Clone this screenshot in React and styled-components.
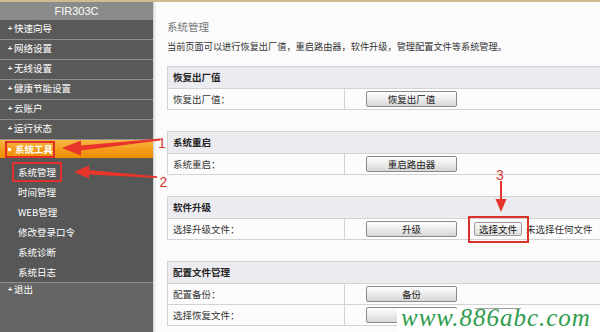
import React from 'react';
import styled, { createGlobalStyle } from 'styled-components';

const Global = createGlobalStyle`
  html, body { margin: 0; padding: 0; background: #fbfbfb; }
  body {
    width: 600px; height: 332px; overflow: hidden;
    font-family: "Noto Sans CJK SC", "Liberation Sans", sans-serif;
  }
`;

const Page = styled.div`
  position: relative;
  width: 600px;
  height: 332px;
  overflow: hidden;
  display: flex;
  flex-direction: column;
  background: #fbfbfb;
`;

const TopLine = styled.div`
  flex: none;
  height: 2px;
  background: #cfbb90;
`;

const Body = styled.div`
  flex: 1;
  display: flex;
  min-height: 0;
`;

const Sidebar = styled.nav`
  flex: none;
  width: 153px;
  display: flex;
  flex-direction: column;
  background: #656565;
  color: #fff;
  font-size: 9.5px;
`;

const Brand = styled.div`
  height: 18px;
  line-height: 18px;
  background: #8b8b8b;
  color: #fff;
  text-align: center;
  font-family: "Liberation Sans", Arial, sans-serif;
  font-size: 11px;
`;

const MenuItem = styled.div`
  height: 19px;
  line-height: 17px;
  border-bottom: 1px solid #8f8f8f;
  background: #595959;
  padding-left: 6px;
  display: flex;
  white-space: nowrap;
`;

const Plus = styled.span`
  display: inline-block;
  width: 8px;
  text-align: center;
  font-size: 8px;
  font-weight: bold;
  font-family: "Liberation Sans", sans-serif;
`;

const ActiveItem = styled.div`
  height: 18px;
  background: linear-gradient(to bottom, #f9b849 0%, #f5a021 45%, #ee8c00 100%);
  padding-left: 5px;
  display: flex;
  align-items: center;
`;

const ActiveMark = styled.span`
  display: inline-flex;
  align-items: center;
  height: 13px;
  line-height: 13px;
  border: 2px solid #e0302a;
  padding: 0 0 0 1px;
  font-weight: bold;
  gap: 4px;
`;

const Square = styled.span`
  width: 3px;
  height: 3px;
  background: #fff;
`;

const SubMenu = styled.div`
  background: #575757;
  padding-top: 4px;
  border-bottom: 1px solid #8f8f8f;
`;

const SubItem = styled.div`
  height: 20px;
  line-height: 20px;
  padding-left: ${p => (p.$marked ? 12 : 18)}px;
  display: flex;
  align-items: center;
`;

const SubMark = styled.span`
  height: 16px;
  line-height: 16px;
  padding: 0 4px;
  border: 2px solid #e0302a;
`;

const Logout = styled.div`
  height: 19px;
  line-height: 13px;
  padding-left: 6px;
  display: flex;
`;

const Divider = styled.div`
  flex: none;
  width: 2px;
  border-left: 1px solid #d2d2d2;
  background: #eeeeee;
`;

const Main = styled.main`
  flex: 1;
  overflow: hidden;
  padding: 18px 0 0 11px;
  color: #333;
`;

const Title = styled.div`
  font-size: 10.5px;
  line-height: 14px;
  color: #777;
`;

const Desc = styled.div`
  margin-top: 5px;
  font-size: 9.2px;
  line-height: 14px;
  color: #333;
  white-space: nowrap;
`;

const Section = styled.section`
  margin-top: ${p => (p.$first ? 13 : 21)}px;
  width: 470px;
  border: 1px solid #d3d3d3;
  background: #fcfcfc;
`;

const SectionHead = styled.div`
  height: 21px;
  line-height: 21px;
  padding-left: 5px;
  background: #ebebf0;
  border-bottom: 1px solid #d3d3d3;
  font-size: 9.5px;
  font-weight: bold;
  color: #222;
`;

const Row = styled.div`
  display: grid;
  grid-template-columns: 177px 1fr;
  height: 20px;
  border-top: ${p => (p.$first ? 'none' : '1px solid #d3d3d3')};
`;

const Label = styled.div`
  border-right: 1px solid #d3d3d3;
  padding-left: 5px;
  line-height: 20px;
  font-size: 9.5px;
  color: #333;
`;

const Cell = styled.div`
  display: flex;
  align-items: center;
  padding-left: 21px;
  font-size: 9.5px;
  white-space: nowrap;
`;

const Button = styled.button`
  width: 91px;
  height: 16px;
  padding: 0;
  border: 1px solid #8a8a8a;
  border-radius: 2px;
  background: linear-gradient(to bottom, #fefefe 0%, #ececec 50%, #d6d6d6 100%);
  font-family: "Noto Sans CJK SC", sans-serif;
  font-size: 9.5px;
  line-height: 14px;
  color: #222;
`;

const FilePick = styled.span`
  position: relative;
  margin-left: 17px;
  display: inline-flex;
  &::after {
    content: '';
    position: absolute;
    left: -6px;
    right: -7px;
    top: -6px;
    bottom: -7px;
    border: 2px solid #d6332b;
  }
`;

const FileButton = styled.button`
  width: 48px;
  height: 14px;
  padding: 0;
  margin-left: ${p => (p.$spaced ? 17 : 0)}px;
  border: 1px solid #9c9c9c;
  border-radius: 2px;
  background: linear-gradient(to bottom, #fafafa, #dedede);
  font-family: "Noto Sans CJK SC", sans-serif;
  font-size: 9.5px;
  line-height: 12px;
  color: #111;
`;

const FileNote = styled.span`
  margin-left: 4px;
  color: #333;
`;

const Overlay = styled.svg`
  position: absolute;
  left: 0;
  top: 0;
  pointer-events: none;
`;

const Watermark = styled.div`
  position: absolute;
  left: 397px;
  top: 309px;
  right: 0;
  bottom: 0;
  background: #fff;
  padding-left: 4px;
  font-family: "Liberation Serif", serif;
  font-style: italic;
  font-size: 25px;
  letter-spacing: 1px;
  line-height: 18px;
  color: #2f9c4e;
  white-space: nowrap;
`;

const menu = ['快速向导', '网络设置', '无线设置', '健康节能设置', '云账户', '运行状态'];
const sub = ['时间管理', 'WEB管理', '修改登录口令', '系统诊断', '系统日志'];

const sections = [
  { head: '恢复出厂值', rows: [{ label: '恢复出厂值：', btn: '恢复出厂值' }] },
  { head: '系统重启', rows: [{ label: '系统重启：', btn: '重启路由器' }] },
  { head: '软件升级', rows: [{ label: '选择升级文件：', btn: '升级', file: true }] },
  {
    head: '配置文件管理',
    rows: [
      { label: '配置备份：', btn: '备份' },
      { label: '选择恢复文件：', btn: '', plainFile: true },
    ],
  },
];

export default function App() {
  return (
    <Page>
      <Global />
      <TopLine />
      <Body>
        <Sidebar>
          <Brand>FIR303C</Brand>
          {menu.map(m => (
            <MenuItem key={m}>
              <Plus>+</Plus>
              {m}
            </MenuItem>
          ))}
          <ActiveItem>
            <ActiveMark>
              <Square />
              系统工具
            </ActiveMark>
          </ActiveItem>
          <SubMenu>
            <SubItem $marked>
              <SubMark>系统管理</SubMark>
            </SubItem>
            {sub.map(s => (
              <SubItem key={s}>{s}</SubItem>
            ))}
          </SubMenu>
          <Logout>
            <Plus>+</Plus>
            退出
          </Logout>
        </Sidebar>
        <Divider />
        <Main>
          <Title>系统管理</Title>
          <Desc>当前页面可以进行恢复出厂值，重启路由器，软件升级，管理配置文件等系统管理。</Desc>
          {sections.map((s, i) => (
            <Section key={s.head} $first={i === 0}>
              <SectionHead>{s.head}</SectionHead>
              {s.rows.map((r, j) => (
                <Row key={r.label} $first={j === 0}>
                  <Label>{r.label}</Label>
                  <Cell>
                    <Button aria-label={r.btn || '恢复'}>{r.btn}</Button>
                    {r.file && (
                      <>
                        <FilePick>
                          <FileButton>选择文件</FileButton>
                        </FilePick>
                        <FileNote>未选择任何文件</FileNote>
                      </>
                    )}
                    {r.plainFile && <FileButton $spaced aria-label="选择文件" />}
                  </Cell>
                </Row>
              ))}
            </Section>
          ))}
        </Main>
      </Body>
      <Overlay width="600" height="332" viewBox="0 0 600 332">
        <polygon
          points="62,148 81,140.5 81,145.5 160,138.6 160,140.4 81,150.5 81,155.5"
          fill="#e8342a"
        />
        <polygon
          points="74,172 89,165.5 89,170 157,176.2 157,178 89,174.5 89,178.5"
          fill="#e8342a"
        />
        <rect x="500" y="181" width="2" height="20" fill="#e8342a" />
        <polygon points="495.5,199 506.5,199 501,212" fill="#e8342a" />
        <g fill="#d63a30" fontFamily="Liberation Sans, sans-serif" fontSize="14">
          <text x="158" y="147.5">1</text>
          <text x="159.5" y="187">2</text>
          <text x="496" y="179.5">3</text>
        </g>
      </Overlay>
      <Watermark>www.886abc.com</Watermark>
    </Page>
  );
}
